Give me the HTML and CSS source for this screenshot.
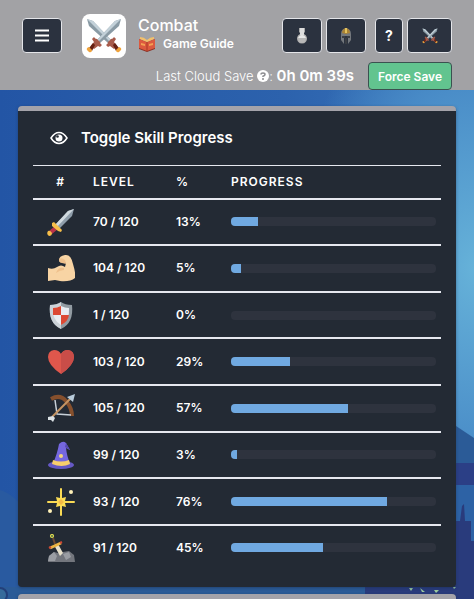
FILE: index.html
```html
<!DOCTYPE html>
<html lang="en">
<head>
<meta charset="utf-8">
<meta name="viewport" content="width=device-width, initial-scale=1">
<title>Combat</title>
<link rel="stylesheet" href="styles.css">
</head>
<body>
<svg class="defs" aria-hidden="true">
  <symbol id="swords" viewBox="0 0 36 36">
    <g id="sword">
      <path fill="#8a9ba5" d="M1 1l6 2 18 19-3 3L3 8z"/>
      <path fill="#c3d1d9" d="M1 1l6 2 18 19-1.500 1.500z"/>
      <path fill="#a75b4b" d="M20 27q2-1 2-3l3-3q2 0 3-2l2 2-2 3 3 4-3 3-4-3-2 1z"/>
      <path fill="#662113" d="M27 27l2-2 4 5-3 3z"/>
      <path fill="#f0a43c" d="M30 32l3-3q3 1 2 3l-2 2q-3 1-3-2z"/>
    </g>
    <use href="#sword" transform="matrix(-1 0 0 1 36 0)"/>
  </symbol>
</svg>
<header class="top">
  <div class="bar">
    <button class="btn menu" aria-label="Menu"><svg viewBox="0 0 14 13"><path d="M0 1.500h14M0 6.500h14M0 11.500h14" stroke="#fff" stroke-width="2"/></svg></button>
    <div class="logo"><svg viewBox="0 0 36 36"><use href="#swords"/></svg></div>
    <div class="titles">
      <h1>Combat</h1>
      <a class="guide" href="#guide"><svg viewBox="0 0 18 16"><path fill="#8c3226" d="M1 3l8 3 8-3v10l-8 3-8-3z"/><path fill="#dc5a3f" d="M1 3l8 3v9l-8-3zM17 3L9 6v9l8-3z"/><path fill="#f3c06b" d="M2 1q4 0 7 3 3-3 7-3v2L9 6 2 3z"/><path d="M9 6v9" stroke="#a93825"/><path d="M3 7l4 1v2L3 9zM15 7l-4 1v2l4-1z" fill="#f4a153"/></svg>Game Guide</a>
    </div>
    <nav class="tools">
      <button class="btn" aria-label="Potions"><svg viewBox="0 0 16 18"><path fill="#aaa" d="M5 1h6v4l-1 1v1a5 5 0 1 1-4 0V6L5 5z"/><path fill="#ddd" d="M6 1h4v7H6z"/><path fill="#e8e8e8" d="M4 11q1-3 4-3t4 3z"/><path fill="#b8b8b8" d="M4 11h8q0 5-4 5t-4-5z"/></svg></button>
      <button class="btn" aria-label="Equipment"><svg viewBox="0 0 16 18"><path fill="#73777c" d="M3 7q0-5 5-6 5 1 5 6v6l-3 4V9H6v8l-3-4z"/><path fill="#a98235" d="M4 6q0-4 4-5 4 1 4 5l-4 1z"/><path fill="#e3c35d" d="M7 1h2v5H7z"/><path fill="#393d43" d="M4 9h3v2H4zM9 9h3v2H9zM7 11h2v6H7z"/></svg></button>
      <button class="btn help" aria-label="Help">?</button>
      <button class="btn wide" aria-label="Combat"><svg viewBox="0 0 36 36"><use href="#swords"/></svg></button>
    </nav>
  </div>
  <div class="save">
    <span class="last">Last Cloud Save <svg viewBox="0 0 12 12"><circle cx="6" cy="6" r="6" fill="#fff"/><path d="M4 4.500Q4 3 6 3t2 1.500Q8 5.500 6 6.300V7" fill="none" stroke="#8c8c90" stroke-width="1.500"/><circle cx="6" cy="9" r="1" fill="#8c8c90"/></svg>: <strong>0h 0m 39s</strong></span>
    <button class="force">Force Save</button>
  </div>
</header>
<div class="stage">
  <svg class="scene" viewBox="0 0 474 509" preserveAspectRatio="none" aria-hidden="true">
    <path fill="#295aa0" d="M0 400q10 2 24 18v91H0z"/>
    <path fill="#2b5b97" d="M450 332l24 16v161H0v-12h450z"/>
    <path fill="#2b3f86" d="M450 373h24v22h-24z"/>
    <path fill="#2d62a5" d="M450 395h24v60h-24z"/>
    <path fill="#293b7c" d="M365 509v-14h85v-64h10l2-15 2-2 1 17h6v20h3v58z"/>
    <circle cx="0" cy="505" r="7" fill="#366b9b" stroke="#233f79" stroke-width="2"/>
    <path fill="#9ccba0" d="M409 498h4l-2 3zM420 498l5 4h-3zM434 500h5l-3 3zM453 497h3l-2 2z"/>
  </svg>
  <main>
    <section class="card">
      <button class="toggle"><svg viewBox="0 0 18 14"><path d="M1 7q3.500-5.500 8-5.500T17 7q-3.500 5.500-8 5.500T1 7z" fill="none" stroke="#fff" stroke-width="1.500"/><circle cx="9" cy="7" r="3.500" fill="#fff"/><circle cx="7.500" cy="5.500" r="1.300" fill="#232a34"/></svg>Toggle Skill Progress</button>
      <table>
        <thead><tr><th class="icon">#</th><th class="level">Level</th><th class="pct">%</th><th>Progress</th></tr></thead>
        <tbody>
          <tr><td class="icon"><svg viewBox="0 0 28 28"><path fill="#8e9daa" d="M27 1l-2 7-13 13-4-4L21 3z"/><path fill="#d0d9df" d="M27 1L10 19l-2-2L21 3z"/><path fill="#b73349" d="M8 18l3 3-6 5-3-3z"/><path fill="#f6be49" d="M5 15l2-1 8 8-1 2-3-1-6-5zM1 23q2-1 4 2 0 3-3 3-3-2-1-5z"/></svg></td><td>70 / 120</td><td>13%</td><td><progress max="100" value="13" aria-label="Attack"></progress></td></tr>
          <tr><td class="icon"><svg viewBox="0 0 28 28"><path fill="#f8d4a4" d="M1 14q5 2 9-1 4-3 8 0l1-4-4-1q-3 1-3-2 0-4 6-5 6-1 8 9 3 10 2 14-5 4-15 3l-5-1-7 1z"/><path fill="#efc08c" d="M12 5q3-2 6 1l1 4-4-1q-3 0-3-4zM17 14q-6-1-8 5 4-3 8-3z"/></svg></td><td>104 / 120</td><td>5%</td><td><progress max="100" value="5" aria-label="Strength"></progress></td></tr>
          <tr><td class="icon"><svg viewBox="0 0 28 28"><path fill="#929ba2" d="M14 1q4 3 11 3 2 18-11 24Q1 22 3 4q7 0 11-3z"/><path fill="#cbd2d8" d="M14 1v27Q1 22 3 4q7 0 11-3z"/><path fill="#e9edf2" d="M14 5q4 2 8 2 1 12-8 17Q5 19 6 7q4 0 8-2z"/><path fill="#dc4934" d="M6 14V7q4 0 8-2v9zM14 14h8q-1 7-8 10z"/></svg></td><td>1 / 120</td><td>0%</td><td><progress max="100" value="0" aria-label="Defence"></progress></td></tr>
          <tr><td class="icon"><svg viewBox="0 0 28 28"><path fill="#df574c" d="M14 26Q1 17 1 9q0-6 6-7 5 0 7 4 2-4 7-4 6 1 6 7 0 8-13 17z"/><path fill="#c94d48" d="M14 6q2-4 7-4 6 1 6 7 0 8-13 17z"/></svg></td><td>103 / 120</td><td>29%</td><td><progress max="100" value="29" aria-label="Hitpoints"></progress></td></tr>
          <tr><td class="icon"><svg viewBox="0 0 28 28"><path d="M4 5q9-5 15 2t6 15" fill="none" stroke="#86502d" stroke-width="4"/><path d="M8 6l2 14 14 1" fill="none" stroke="#c8d0d8" stroke-width="1.500"/><path d="M5 23L24 4" stroke="#c49463" stroke-width="2"/><path fill="#b9ccdb" d="M28 0l-2 8-6-5z"/><path fill="#dce2e5" d="M1 23l5-1 2 2-2 4-2-2H1z"/></svg></td><td>105 / 120</td><td>57%</td><td><progress max="100" value="57" aria-label="Ranged"></progress></td></tr>
          <tr><td class="icon"><svg viewBox="0 0 28 28"><ellipse cx="14" cy="24" rx="13" ry="4" fill="#6558c5"/><path fill="#7567df" d="M6 22q4-8 6-19 4-4 7-1l4 7-4-2q1 9 4 15z"/><path fill="#5549b0" d="M19 2l4 7-5-3z"/><path fill="#f8ce6b" d="M6 19q8 3 16 0l1 4q-8 4-18 0z"/><circle cx="14" cy="15" r="2" fill="#f4d57c"/></svg></td><td>99 / 120</td><td>3%</td><td><progress max="100" value="3" aria-label="Magic"></progress></td></tr>
          <tr><td class="icon"><svg viewBox="0 0 28 28"><path d="M14 1v26M1 14h26" stroke="#f9da55" stroke-width="2" stroke-linecap="round"/><path fill="#fbdc55" d="M14 6l1 4 4-1-1 4 4 1-4 1 1 4-4-1-1 4-1-4-4 1 1-4-4-1 4-1-1-4 4 1z"/><path fill="#f3b945" d="M14 11l3 3-3 3-3-3z"/><circle cx="24" cy="4" r="2" fill="#fff1b8"/><circle cx="3" cy="23" r="2" fill="#fff1b8"/></svg></td><td>93 / 120</td><td>76%</td><td><progress max="100" value="76" aria-label="Prayer"></progress></td></tr>
          <tr><td class="icon"><svg viewBox="0 0 28 28"><path fill="#73767d" d="M1 28l1-6 5-4 4 1 5-1 6-1 5 4 1 7z"/><path fill="#9a9da3" d="M2 22l5-4 3 4-2 5H1zM16 20l6-2 2 5-5 3z"/><path fill="#e8e1cb" d="M7 11l4-1 5 9-3 3z"/><path d="M3 14l11-5" stroke="#ebb442" stroke-width="3"/><path d="M2 14l2-1M13 9l2-1" stroke="#d04835" stroke-width="2"/><path d="M8 10L6 4" stroke="#6b4932" stroke-width="2"/><circle cx="5" cy="2" r="1.500" fill="#45644a" stroke="#dcd750" stroke-width="1.200"/></svg></td><td>91 / 120</td><td>45%</td><td><progress max="100" value="45" aria-label="Slayer"></progress></td></tr>
        </tbody>
      </table>
    </section>
    <section class="card next"></section>
  </main>
</div>
</body>
</html>
```
FILE: styles.css
```css
* { box-sizing: border-box; }
html, body { height: 100%; }
body {
  margin: 0;
  display: flex;
  flex-direction: column;
  overflow: hidden;
  background: #2c5ea8;
  color: #fff;
  font-family: Inter, "Liberation Sans", sans-serif;
}
svg { display: block; }
button { font-family: inherit; color: inherit; cursor: pointer; }
.defs { position: absolute; width: 0; height: 0; }
.top {
  flex: none;
  padding: 13px 22px 0;
  background: #a2a2a5;
}
.bar { display: flex; align-items: center; height: 45px; }
.btn {
  display: flex;
  align-items: center;
  justify-content: center;
  width: 40px;
  height: 35px;
  padding: 0;
  border: 1px solid #e4e5e9;
  border-radius: 4px;
  background: #2b323f;
}
.btn svg { width: 16px; height: 18px; }
.btn.menu svg { width: 14px; height: 13px; }
.logo {
  margin-left: 20px;
  padding: 4px;
  border-radius: 8px;
  background: #fff;
}
.logo svg { width: 36px; height: 36px; }
.titles { margin-left: 12px; padding-bottom: 4px; }
h1 { margin: 0; font-size: 16px; line-height: 20px; font-weight: 500; }
.guide {
  display: flex;
  align-items: center;
  gap: 7px;
  color: #fff;
  font-size: 12px;
  line-height: 18px;
  font-weight: 600;
  text-decoration: none;
}
.guide svg { width: 18px; height: 16px; }
.tools { display: flex; gap: 4px; margin-left: auto; }
.btn.help { width: 28px; margin-left: 5px; font-size: 14px; font-weight: 700; }
.btn.wide { width: 45px; }
.save {
  display: flex;
  align-items: center;
  justify-content: flex-end;
  gap: 14px;
  padding-top: 4px;
}
.last { font-size: 13px; line-height: 20px; font-weight: 300; }
.last svg { display: inline-block; width: 12px; height: 12px; vertical-align: -1px; }
.last strong { font-size: 15px; font-weight: 600; }
.force {
  height: 28px;
  padding: 0 9px;
  border: 1px solid #3b5150;
  border-radius: 4px;
  background: #62c48f;
  font-size: 12px;
  font-weight: 600;
}
.stage {
  position: relative;
  flex: 1;
  min-height: 0;
  overflow: hidden;
  background:
    radial-gradient(ellipse 180px 300px at 100% 35%, #66b2d9 0, #4a8dc8 60%, transparent 100%),
    linear-gradient(90deg, #2355a5 0, #2c62ad 60%, #3b78bd 100%);
}
.scene { position: absolute; inset: 0; width: 100%; height: 100%; }
main { position: relative; padding: 16px 18px 0; }
.card {
  padding: 17px 15px 17px;
  border-top: 5px solid #a4a3aa;
  border-radius: 4px;
  background: #232a34;
  box-shadow: 0 1px 3px #172e5080;
}
.next { margin-top: 7px; }
.toggle {
  display: flex;
  align-items: center;
  gap: 13px;
  padding: 0 0 0 17px;
  border: 0;
  background: none;
  font-size: 15px;
  line-height: 20px;
  font-weight: 600;
}
.toggle svg { width: 18px; height: 14px; }
table {
  width: 100%;
  height: 405px;
  margin-top: 17px;
  border-collapse: collapse;
  table-layout: fixed;
  font-size: 12px;
  line-height: 16px;
  font-weight: 600;
}
thead tr { height: 33px; }
th {
  padding: 0 5px;
  border-top: 1px solid #e6e8ef;
  text-align: left;
  text-transform: uppercase;
  letter-spacing: 1px;
  font-weight: 600;
}
td { padding: 0 5px; border-top: 2px solid #e6e8ef; }
.icon { width: 55px; text-align: center; }
td.icon svg { width: 28px; height: 28px; margin: 0 auto; }
.level { width: 83px; }
.pct { width: 55px; }
progress {
  display: block;
  width: 100%;
  height: 9px;
  border: 0;
  border-radius: 4px;
  overflow: hidden;
  appearance: none;
  background: #2e333e;
}
progress::-webkit-progress-bar { background: #2e333e; }
progress::-webkit-progress-value { background: #70a9e1; }
```
